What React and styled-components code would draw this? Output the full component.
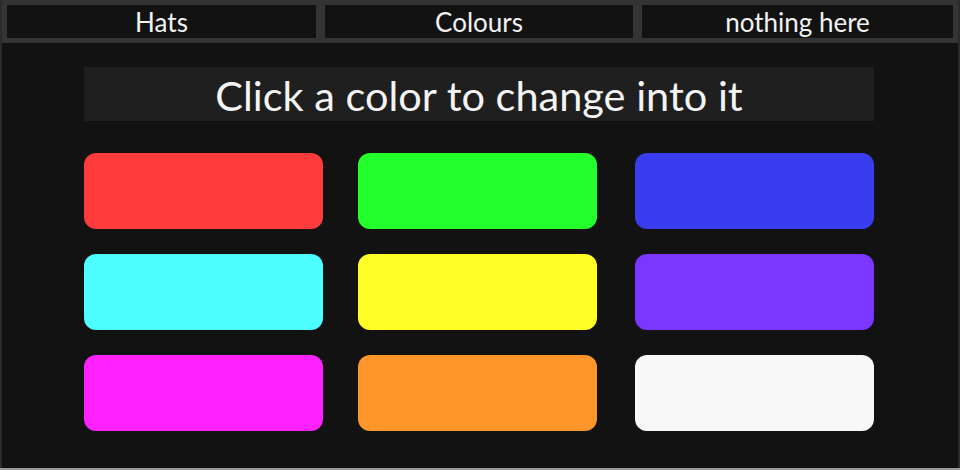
import styled, { createGlobalStyle } from 'styled-components';

const GlobalStyle = createGlobalStyle`
  html, body {
    margin: 0;
    padding: 0;
    background: #1a2626;
  }
  body {
    font-family: "Lato", "Noto Sans", sans-serif;
  }
`;

const Frame = styled.div`
  width: 960px;
  height: 470px;
  box-sizing: border-box;
  display: flex;
  flex-direction: column;
  background: #2b2b2b;
  border-bottom: 2px solid #9a9a9a;
`;

const TabBar = styled.div`
  display: grid;
  grid-template-columns: 309px 308px 311px;
  column-gap: 9px;
  height: 43px;
  box-sizing: border-box;
  padding: 5px 0 5px 5px;
  margin: 0 2px;
  background: #343434;
`;

const Tab = styled.button`
  border: none;
  margin: 0;
  padding: 0;
  height: 33px;
  background: #121212;
  color: #f2f2f2;
  font-family: "Lato", "Noto Sans", sans-serif;
  font-size: 26px;
  line-height: 34px;
  text-align: center;
`;

const Panel = styled.div`
  flex: 1;
  margin: 0 2px;
  background: #121212;
  display: flex;
  flex-direction: column;
  align-items: center;
  padding-top: 24px;
`;

const Title = styled.div`
  width: 790px;
  height: 54px;
  margin-right: 2px;
  background: #1f1f1f;
  color: #f4f4f4;
  font-size: 41.5px;
  line-height: 56px;
  text-align: center;
`;

const Swatches = styled.div`
  width: 790px;
  margin-right: 2px;
  margin-top: 32px;
  display: grid;
  grid-template-columns: 239px 35px 239px 38px 239px;
  row-gap: 25px;
`;

const Swatch = styled.button`
  grid-column: ${(props) => props.column * 2 + 1};
  border: none;
  padding: 0;
  height: 76px;
  border-radius: 12px;
  background: ${(props) => props.color};
  cursor: pointer;
`;

const tabs = ['Hats', 'Colours', 'nothing here'];

const colors = [
  '#ff3b3b',
  '#22ff2a',
  '#3a3cf0',
  '#4dfeff',
  '#ffff26',
  '#7b36ff',
  '#ff22ff',
  '#ff962a',
  '#f8f8f8'
];

const App = () => {
  return (
    <>
      <GlobalStyle />
      <Frame>
        <TabBar>
          {tabs.map((tab) => (
            <Tab key={tab}>{tab}</Tab>
          ))}
        </TabBar>
        <Panel>
          <Title>Click a color to change into it</Title>
          <Swatches>
            {colors.map((color, index) => (
              <Swatch key={color} color={color} column={index % 3} />
            ))}
          </Swatches>
        </Panel>
      </Frame>
    </>
  );
};

export default App;
